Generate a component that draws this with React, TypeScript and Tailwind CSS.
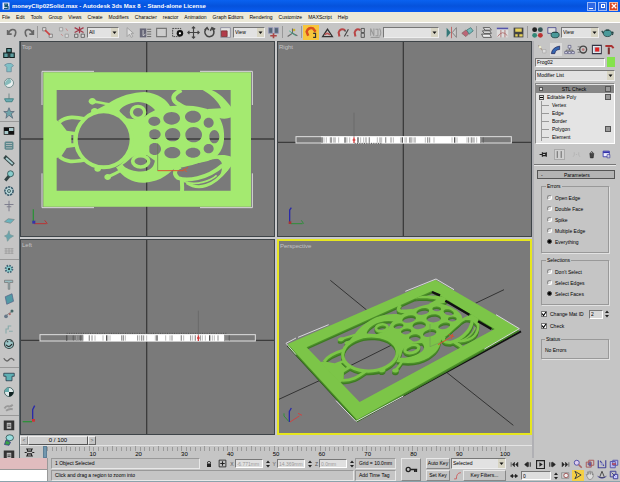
import React from 'react';

type Stroke = { d: string; w: number };
type Point = [number, number];

const menus = [
  'File', 'Edit', 'Tools', 'Group', 'Views', 'Create', 'Modifiers', 'Character', 'reactor', 'Animation',
  'Graph Editors', 'Rendering', 'Customize', 'MAXScript', 'Help',
];

/* ---------- frog model ---------- */

function ellipse(cx: number, cy: number, rx: number, ry: number) {
  const kx = rx * 0.55;
  const ky = ry * 0.55;
  return `M${cx - rx},${cy} C${cx - rx},${cy - ky} ${cx - kx},${cy - ry} ${cx},${cy - ry} C${cx + kx},${cy - ry} ${cx + rx},${cy - ky} ${cx + rx},${cy} C${cx + rx},${cy + ky} ${cx + kx},${cy + ry} ${cx},${cy + ry} C${cx - kx},${cy + ry} ${cx - rx},${cy + ky} ${cx - rx},${cy}Z`;
}

const shellHoles = [
  [403, 244, 18, 14], [455, 235, 25, 19], [519, 230, 24, 18], [566, 248, 15, 15],
  [404, 283, 18, 15], [458, 284, 23, 20], [521, 284, 25, 23], [583, 290, 15, 20],
  [404, 327, 19, 18], [457, 338, 24, 17], [519, 338, 22, 15], [566, 326, 15, 14],
].map(([cx, cy, rx, ry]) => ellipse(cx, cy, rx, ry)).join(' ');

const fills = [
  // frame
  'M70,97 L380,97 L693,97 L693,500 L380,500 L70,500Z M110,150 L110,452 L632,452 L632,150Z',
  // shell with its holes
  `M372,232 C390,215 420,203 446,199 C510,192 560,200 590,222 C610,245 614,275 612,300 C608,335 590,360 550,366 C520,372 490,376 455,390 L405,362 L380,345Z ${shellHoles}`,
  // neck
  'M318,235 L345,238 L376,230 L388,262 L388,345 L345,347 L318,360 C335,320 335,275 318,235Z',
  // upper arm
  'M232,208 L262,192 C300,166 340,157 375,156 C415,160 442,180 452,202 L410,218 C395,192 365,182 340,188 C322,192 305,200 298,212 C306,224 322,232 334,250 L320,248 C300,225 275,212 232,218Z',
  // lower arm
  'M288,382 C310,415 340,430 375,428 C425,424 450,400 474,372 L405,360 C402,385 385,398 350,394 C325,390 312,380 308,374 C322,365 332,355 342,344 L322,344 C312,365 302,375 288,382Z',
  // jaw
  'M108,240 L120,246 L140,272 L168,276 L168,320 L140,324 L122,352 L108,354Z M154,285 L154,310 L160,310 L160,285Z',
  // upper foot
  'M548,150 L575,150 C610,165 628,195 634,202 L634,232 C615,240 595,236 578,225 L562,207 L603,205 C595,185 575,165 548,150Z',
  // lower foot
  'M578,348 C600,343 620,344 634,350 L634,378 C620,396 610,408 596,416 C604,398 610,382 604,366 C598,358 588,352 578,348Z',
  ellipse(217, 184, 11, 10),
  ellipse(224, 213, 11, 9),
  ellipse(263, 411, 10, 9),
  ellipse(233, 387, 10, 8),
];

const strokes: Stroke[] = [
  { d: ellipse(251, 298, 84, 84), w: 12 },
  { d: ellipse(354, 217, 20, 18), w: 10 },
  { d: ellipse(362, 364, 24, 17), w: 11 },
  { d: 'M118,246 C140,228 165,230 196,237', w: 11 },
  { d: 'M118,350 C140,368 160,366 192,360', w: 11 },
  { d: 'M217,184 C230,185 248,190 268,193', w: 8 },
  { d: 'M263,411 C275,406 288,400 305,390', w: 9 },
  { d: 'M484,150 C468,158 456,168 462,180 C468,192 485,196 496,204', w: 13 },
  { d: 'M482,380 C462,388 460,402 474,414 C500,424 560,418 608,376', w: 12 },
  { d: 'M482,378 C520,374 560,350 600,352', w: 9 },
  { d: 'M486,416 C484,425 488,435 486,454', w: 12 },
  { d: 'M500,428 C535,452 580,440 620,388', w: 9 },
  { d: 'M490,424 C530,440 575,420 590,406', w: 5 },
];

// Maps the flat top view onto the quad that the camera sees.
const quad: Point[] = [[35, 318], [478, 125], [730, 272], [243, 545]];

function project(x: number, y: number): Point {
  const [[x0, y0], [x1, y1], [x2, y2], [x3, y3]] = quad;
  const u = (x - 70) / 623;
  const v = (y - 97) / 403;
  const sx = x0 - x1 + x2 - x3;
  const sy = y0 - y1 + y2 - y3;
  const den = (x1 - x2) * (y3 - y2) - (x3 - x2) * (y1 - y2);
  const g = (sx * (y3 - y2) - (x3 - x2) * sy) / den;
  const h = ((x1 - x2) * sy - sx * (y1 - y2)) / den;
  const w = g * u + h * v + 1;
  return [
    (x0 + (x1 - x0 + g * x1) * u + (x3 - x0 + h * x3) * v) / w,
    (y0 + (y1 - y0 + g * y1) * u + (y3 - y0 + h * y3) * v) / w,
  ];
}

function projectPath(d: string) {
  return d.replace(/(-?[\d.]+),(-?[\d.]+)/g, (_, a, b) =>
    project(Number(a), Number(b)).map((n) => n.toFixed(1)).join(','));
}

function Frog({ color, perspective = false }: { color: string; perspective?: boolean }) {
  const map = perspective ? projectPath : (d: string) => d;
  const scale = perspective ? 0.8 : 1;
  return (
    <g>
      {fills.map((d, i) => <path key={i} d={map(d)} fill={color} fillRule="evenodd" />)}
      {strokes.map((s, i) => <path key={i} d={map(s.d)} fill="none" stroke={color} strokeWidth={s.w * scale} />)}
    </g>
  );
}

/* ---------- viewports ---------- */

function Viewport({ name, viewBox, active, children }: { name: string; viewBox: string; active?: boolean; children: React.ReactNode }) {
  return (
    <section className={`relative min-h-0 min-w-0 overflow-hidden bg-[#7a7a7a] ${active ? 'border-2 border-[#e6e61e]' : 'border border-[#3e4448]'}`}>
      <svg viewBox={viewBox} className="block h-full w-full" preserveAspectRatio="xMidYMid meet">{children}</svg>
      <h2 className="absolute left-px top-px text-[6px] leading-[8px] text-[#c4c4c4]">{name}</h2>
    </section>
  );
}

function Cross({ x, y }: { x: number; y: number }) {
  return <path d={`M${x},0V600 M0,${y}H770`} stroke="#3c3c3c" strokeWidth="4" />;
}

const rightBars = [138, 144, 151, 163, 166, 172, 177, 188, 206, 209, 213, 221, 246, 254, 263, 270, 280, 304, 312, 317, 329, 345, 352, 374, 379, 387, 391, 401, 405, 411, 417, 448, 455, 461, 474, 528, 536, 543, 573, 578, 586, 590, 594, 602, 614, 622];
const leftBars = [140, 147, 153, 160, 170, 175, 182, 188, 208, 216, 225, 249, 260, 264, 270, 305, 310, 316, 353, 359, 365, 371, 380, 406, 411, 437, 450, 456, 484, 491, 512, 518, 526, 541, 547, 556, 569, 577, 583, 594, 614, 621, 628];

function SideView({ bars, start, end, red, shade }: { bars: number[]; start: number; end: number; red: number; shade: string }) {
  return (
    <g>
      <rect x="60" y="290" width="646" height="19" fill="#7a7a7a" stroke="#e0e0e0" strokeWidth="3" />
      <rect x={start} y="289" width={end - start} height="21" fill="#fff" />
      {bars.map((x, i) => <path key={x} d={`M${x},292V308`} stroke={i % 3 === 0 ? '#555' : '#999'} strokeWidth={i % 4 === 0 ? 4 : 2} />)}
      <path d={shade} stroke="#555" strokeWidth="3" strokeDasharray="3 4" fill="none" />
      <path d={`M${red},218V290`} stroke="#6a6a6a" strokeWidth="3" />
      <path d={`M${red},292V309 M${red - 4},300H${red + 4}`} stroke="#d33a3a" strokeWidth="4" />
    </g>
  );
}

function Viewports() {
  return (
    <div className="grid min-h-0 flex-1 grid-cols-2 grid-rows-2 gap-[2px] bg-[#c9c9cb]">
      <Viewport name="Top" viewBox="3 6 759 582">
        <Cross x={380} y={297} />
        <Frog color="#a4ea70" />
        <path d="M66,195V94H222 M540,94H697V195 M66,400V503H222 M540,503H697V400" fill="none" stroke="#dcdcdc" strokeWidth="3" />
        <path d="M413,310V392" stroke="#5f7a4b" strokeWidth="2" />
        <path d="M413,392H490 M488,392L504,382 M490,386L500,396" stroke="#d8562f" strokeWidth="3" fill="none" />
        <path d="M40,548V508" stroke="#2f8f3a" strokeWidth="4" />
        <path d="M42,551H80 M74,541L82,551" stroke="#b33" strokeWidth="3" />
        <rect x="37" y="542" width="9" height="9" fill="#33a" />
      </Viewport>
      <Viewport name="Right" viewBox="6 6 759 582">
        <Cross x={382} y={307} />
        <SideView bars={rightBars} start={135} end={612} red={234} shade="M236,310H320" />
        <path d="M41,548V510L46,503" stroke="#2a2aa8" strokeWidth="4" fill="none" />
        <path d="M44,551H80 M76,541L83,551" stroke="#2f8f3a" strokeWidth="3" />
        <rect x="38" y="544" width="8" height="8" fill="#a33" />
      </Viewport>
      <Viewport name="Left" viewBox="3 6 759 582">
        <Cross x={380} y={307} />
        <SideView bars={leftBars} start={190} end={612} red={535} shade="M140,286H620" />
        <path d="M38,548V515L44,503" stroke="#2a2aa8" strokeWidth="4" fill="none" />
        <path d="M36,551H8" stroke="#2f8f3a" strokeWidth="4" />
        <rect x="36" y="543" width="9" height="8" fill="#c33" />
      </Viewport>
      <Viewport name="Perspective" viewBox="9 9 753 576" active>
        <path d="M163,127L272,216 M598,196L684,155 M0,488L130,428 M508,400L712,562 M225,382L345,322" stroke="#333" strokeWidth="3" />
        <path d="M35,322L243,548L735,280" fill="none" stroke="#111" strokeWidth="6" />
        <g transform="translate(0 8)"><Frog color="#3d7a22" perspective /></g>
        <g transform="translate(0 4)"><Frog color="#4c8f2a" perspective /></g>
        <Frog color="#7cc548" perspective />
        <path d="M468,162L492,172 M508,188L580,230 M606,250L646,273" stroke="#111" strokeWidth="7" />
        <path d="M60,300L30,316L60,350 M66,298L158,260 M388,160L480,123L534,155 M180,488L240,550L382,474 M660,230L730,272L625,333" fill="none" stroke="#d8d8dc" strokeWidth="3" />
        <path d="M462,258V326L496,312" stroke="#6f9b55" strokeWidth="2" fill="none" />
        <path d="M486,320L524,298 M518,290L534,296 M526,302L530,288" stroke="#d8502f" strokeWidth="3" />
        <path d="M40,552V520L46,510" stroke="#2a2aa8" strokeWidth="4" fill="none" />
        <path d="M42,552L70,534 M66,526L78,532" stroke="#c44" strokeWidth="3" />
        <path d="M38,550L24,534V526" stroke="#2f8f3a" strokeWidth="3" fill="none" />
      </Viewport>
    </div>
  );
}

/* ---------- icons, all on a 16 unit grid ---------- */

const icons: Record<string, React.ReactNode> = {
  undo: <path d="M3 9C5 3 12 3 12 8Q12 11 10 13M2 5v5h5" stroke="#666" strokeWidth="2" />,
  redo: <path d="M13 9C11 3 4 3 4 8Q4 11 6 13M14 5v5H9" stroke="#666" strokeWidth="2" />,
  link: <><path d="M2 2h4v4H2zM10 10h4v4h-4z" stroke="#777" fill="#ddd" /><path d="M5 5l6 6" stroke="#c44" strokeWidth="2" /></>,
  unlink: <><path d="M3 2h4v4H3zM10 10h4v4h-4z" stroke="#999" fill="#ddd" /><path d="M11 3l2 3M5 10l2 2" stroke="#c77" /></>,
  bind: <><path d="M2 2l11 6M13 2L2 8M8 1v8" stroke="#a23a4a" strokeWidth="1.500" /><path d="M2 10h4v4H2zM10 10h4v4h-4z" fill="#ddd" stroke="#555" /></>,
  pointer: <path d="M5 2v11l3-3 2 4 2-1-2-4h3z" fill="#ddd" stroke="#999" />,
  byName: <><path d="M1 3h8v11H1z" fill="#667" /><path d="M10 4h5M10 7h5M10 10h5M10 13h5" stroke="#555" /><path d="M5 5v7l3-2" stroke="#ddd" /></>,
  rect: <path d="M2 3h12v10H2z" stroke="#777" strokeWidth="1.400" fill="#ccc" />,
  window: <><path d="M2 3h10v10H2z" stroke="#333" strokeDasharray="2 1" /><circle cx="11" cy="9" r="4" fill="#111" /><circle cx="11" cy="9" r="1.400" fill="#fff" /></>,
  move: <path d="M8 1v14M1 8h14M6 3l2-2 2 2M6 13l2 2 2-2M3 6L1 8l2 2M13 6l2 2-2 2" stroke="#444" strokeWidth="1.400" />,
  rotate: <path d="M4 3C0 8 4 14 9 13s6-7 2-10M2 5l3-3 2 3M9 6l2-4 4 2" stroke="#444" strokeWidth="1.800" />,
  scale: <><path d="M2 2h12v12H2z" fill="#e4e4e4" stroke="#889" /><path d="M3 6h7v7H3z" fill="#b23a4a" stroke="#733" /></>,
  pivot: <><path d="M2 2h5v7H2zM9 2h5v7H9z" fill="#567" stroke="#99b" /><path d="M4 12h8M8 9v6" stroke="#a44" strokeWidth="2" /></>,
  manip: <><path d="M8 3v6L2 13M8 9l6 3" stroke="#666" strokeWidth="1.400" /><circle cx="10" cy="5" r="1.500" fill="#c9b12c" /><path d="M4 6l8 6" stroke="#3a8" /></>,
  snap: <><path d="M4 12L2 7q2-6 8-4l3 4" stroke="#d9501c" strokeWidth="3" /><path d="M10 9h3v5h-3" stroke="#333" strokeWidth="1.400" /></>,
  angle: <><path d="M2 13L8 4l6 9z" stroke="#333" strokeWidth="1.600" /><path d="M5 11q2-4 6 0" stroke="#b55" strokeWidth="2" /></>,
  percent: <><path d="M3 13L2 8q2-6 8-3" stroke="#b84747" strokeWidth="2.500" /><path d="M9 13l5-9M9 6h2M12 12h2" stroke="#444" strokeWidth="1.400" /></>,
  spinner: <><path d="M3 13L2 8q2-6 7-3" stroke="#b84747" strokeWidth="2.500" /><path d="M10 3h4v5h-4zM10 9h4v5h-4z" stroke="#444" /></>,
  sets: <><path d="M2 12V3l4 9V3M8 4h3v8H8M13 3q3 5 0 10" stroke="#999" strokeWidth="1.300" /><path d="M2 14h11" stroke="#888" /></>,
  mirror: <><path d="M2 2v12l5-6z" fill="#377" /><path d="M14 2v12L9 8z" fill="#ccc" stroke="#777" /><path d="M8 1v14" stroke="#b55" /></>,
  align: <><path d="M1 9l5-4 5 3-5 5z" fill="#b67" stroke="#866" /><path d="M7 5l5-3 3 4-5 4z" fill="#7bb" stroke="#477" /></>,
  layers: <path d="M4 2h8l2 3H6zM3 6h9l2 3H5zM2 10h10l2 4H4z" fill="#eee" stroke="#444" />,
  curve: <><path d="M1 2h14v12H1z" fill="#ddd" /><path d="M1 3h14" stroke="#55a" strokeWidth="2" /><path d="M2 13Q8 4 14 12M6 5v9M11 5v9" stroke="#a66" /></>,
  schematic: <><path d="M2 2h12v12H2z" fill="#444" /><path d="M4 3h8v4H4zM4 10h3v3H4zM9 10h4v3H9z" fill="#e7d25a" /></>,
  material: <><circle cx="4.500" cy="4.500" r="3" fill="#222" /><circle cx="11.500" cy="4.500" r="3" fill="#355" /><circle cx="4.500" cy="11.500" r="3" fill="#387" /><circle cx="11.500" cy="11.500" r="3" fill="#b33" /></>,
  render: <><path d="M1 2h10v7H1z" fill="#ddd" stroke="#448" /><ellipse cx="10" cy="11" rx="5" ry="3.500" fill="#4a9a9a" stroke="#244" /><path d="M7 8h6" stroke="#244" /></>,
  teapot: <><ellipse cx="8" cy="9" rx="5" ry="4" fill="#4a9a9a" stroke="#244" /><path d="M3 9L1 6M13 8q3-2 1 3M6 5h4" stroke="#244" strokeWidth="1.500" /></>,
  cubes: <path d="M5 2h6v5H5zM1 8h6v6H1zM9 8h6v6H9z" fill="#5d9c9e" stroke="#122" strokeWidth="1.500" />,
  cloth: <path d="M2 4l4-2h5l3 3-3 2v6H5V7z" fill="#7fc0c6" stroke="#689" />,
  ball: <><circle cx="8" cy="8" r="6" fill="#e8eeee" stroke="#577" /><path d="M8 2q5 3 2 6l-7 4Q1 6 8 2" fill="#8bb" /></>,
  boat: <><path d="M2 9h12l-2 4H4z" fill="#6aacb4" stroke="#377" /><path d="M8 2v7" stroke="#577" /></>,
  star: <path d="M8 1l2 5h5l-4 3 2 6-5-4-4 4 1-6-4-3h5z" fill="#6fa4aa" stroke="#567" />,
  checker: <><path d="M1 3h14v10H1z" fill="#111" /><path d="M2 8h5v4H2zM8 4h6v4H8z" fill="#a8c8ca" /></>,
  spring: <path d="M3 3h10M3 6h10M3 9h10M3 12h10M3 3v9M13 3v9" stroke="#5c878c" strokeWidth="1.800" />,
  brush: <><path d="M2 2l12 11" stroke="#344" strokeWidth="5" /><path d="M4 4l9 8" stroke="#a9cdd0" strokeWidth="2.500" /></>,
  hammer: <><path d="M3 14l6-7" stroke="#344" strokeWidth="4" /><circle cx="10" cy="5" r="4" fill="#8cc" stroke="#244" /></>,
  wheel: <><circle cx="8" cy="8" r="5.500" fill="#b9d6d8" stroke="#356" strokeWidth="2" strokeDasharray="3 1" /><circle cx="8" cy="8" r="2" stroke="#244" /></>,
  axis: <path d="M8 1v14M2 6h12M5 9h6" stroke="#778" strokeWidth="1.200" />,
  plane: <path d="M2 9l5-4 8 1-5 5z" fill="#6ab4be" stroke="#788" />,
  crystal: <path d="M8 1l1 5 5 2-5 3-3 4-1-5-3-2 4-2z" fill="#6aa4ac" stroke="#799" />,
  grid: <path d="M2 5h12M2 8h12M2 11h12M4 4v8M8 4v8M12 4v8" stroke="#999" />,
  gear: <><circle cx="8" cy="8" r="4.500" fill="#8cc" stroke="#467" strokeWidth="2.500" strokeDasharray="2 1.500" /><circle cx="8" cy="8" r="1.500" fill="#233" /></>,
  tee: <path d="M2 3h11v3H9v9H7V6H2z" fill="#97bcc0" stroke="#777" />,
  box: <path d="M3 5l9-4 2 10-9 4z" fill="#5199a5" stroke="#568" />,
  nodes: <><path d="M3 11l5-4 5-3" stroke="#777" /><circle cx="4" cy="11" r="2.500" fill="#678" /><circle cx="12" cy="4" r="2" fill="#466" /><circle cx="9" cy="8" r="1.500" fill="#a66" /></>,
  steps: <path d="M4 14V8h3V4h4M8 11h5" stroke="#8aa" strokeWidth="1.500" />,
  face: <><circle cx="8" cy="8" r="6" fill="#9cc6c8" stroke="#344" strokeWidth="1.500" /><path d="M4 9q4 5 8-1M5 5h2M10 4h2" stroke="#222" strokeWidth="1.500" /></>,
  wave: <path d="M1 7q4 6 7 2t7 1" stroke="#666" strokeWidth="1.800" />,
  shirt: <path d="M1 3h14v4h-3v6H4V7H1z" fill="#5fb0b4" stroke="#234" />,
  orb: <><circle cx="8" cy="8" r="6" fill="#dfe9ea" stroke="#244" /><path d="M8 8h6q-1 6-6 6z" fill="#122" /><path d="M2 8Q3 2 8 2v6z" fill="#6aa" /></>,
  fog: <path d="M2 10q2-4 5-3t6-2M4 13q4-3 9-2" stroke="#999" strokeWidth="2.500" />,
  panel: <><path d="M1 2h14v13H1z" fill="#333" /><path d="M5 5h6v8H5z" fill="#bbb" /><path d="M6 8h4M6 10h4" stroke="#333" /></>,
  preview: <><ellipse cx="9" cy="5" rx="5" ry="4" fill="#9dd" stroke="#244" /><path d="M2 14l2-6 6 3-2 4z" fill="#36a147" stroke="#338" /></>,
  sun: <><path d="M2 2l9 11" stroke="#a98" strokeWidth="1.500" /><path d="M3 3h3v3H3z" fill="#eec" /><path d="M8 8h5v5H8z" fill="#ddd" stroke="#aaa" /></>,
  bend: <path d="M2 14Q3 5 14 3v5Q8 8 7 14z" fill="#3566b0" stroke="#225" />,
  tree: <><path d="M8 5v4M3 12V9h10v3" stroke="#555" /><path d="M6 2h4v4H6zM1 11h4v3H1zM6 11h4v3H6zM11 11h4v3h-4z" fill="#dde" stroke="#557" /></>,
  motion: <><circle cx="9" cy="8" r="5" stroke="#444" strokeWidth="2" /><circle cx="9" cy="8" r="2" fill="#b77" /><path d="M1 4h4M0 8h4M1 12h4" stroke="#666" /></>,
  display: <><path d="M2 2h13v12H2z" fill="#eee" stroke="#334" strokeWidth="1.500" /><path d="M4 4h9v8H4z" fill="#bcd" /><path d="M6 5h6v6H6z" fill="#d22" /></>,
  tools: <><path d="M7 5v10" stroke="#733" strokeWidth="3" /><path d="M2 3h9l3 3" stroke="#a33" strokeWidth="3" /></>,
  pin: <path d="M1 8h5M6 4v8M6 6h6v4H6M13 4v8" stroke="#222" strokeWidth="2" />,
  result: <path d="M4 2v12M11 2v12" stroke="#555" strokeWidth="1.500" />,
  unique: <path d="M4 4v5l-2 3M12 4v5l2 3M7 8h2" stroke="#aaa" />,
  trash: <><path d="M5 6h7l-1 8H6z" fill="#444" stroke="#222" /><path d="M6 5q2-4 5 0" stroke="#222" strokeWidth="1.500" /></>,
  config: <><path d="M2 2h11v10H2z" fill="#eef" stroke="#33a" strokeWidth="1.500" /><path d="M2 4h11" stroke="#33a" strokeWidth="3" /><path d="M9 8h5v6H9z" fill="#ccd" stroke="#339" /></>,
  curveMini: <path d="M3 3h10M3 13h10M5 3v3h6V3M5 13v-3h6v3M1 8h3M12 8h3" stroke="#222" strokeWidth="1.500" />,
  lock: <><path d="M4 7h8v7H4z" fill="#222" /><path d="M5 7V4q3-3 6 0v3" stroke="#222" strokeWidth="1.500" /></>,
  absolute: <><path d="M2 2h12v12H2z" stroke="#222" strokeWidth="1.500" /><path d="M8 4v8M4 8h8" stroke="#222" strokeWidth="2" /></>,
  key: <><circle cx="4" cy="8" r="2.500" stroke="#222" strokeWidth="1.600" /><path d="M7 8h8M12 8v3M14 8v3" stroke="#222" strokeWidth="1.800" /></>,
  tangent: <path d="M2 14h4Q6 3 14 3" stroke="#c55" strokeWidth="1.500" />,
  first: <path d="M2 4v8M8 4L4 8l4 4zM14 4l-4 4 4 4z" fill="#222" stroke="#222" />,
  prev: <path d="M8 4L3 8l5 4zM10 4v8M13 4v8" fill="#222" stroke="#222" strokeWidth="1.500" />,
  play: <><path d="M1 1h14v14H1z" stroke="#222" strokeWidth="2" /><path d="M6 4l6 4-6 4z" fill="#222" /></>,
  next: <path d="M8 4l5 4-5 4zM3 4v8M6 4v8" fill="#222" stroke="#222" strokeWidth="1.500" />,
  last: <path d="M14 4v8M8 4l4 4-4 4zM2 4l4 4-4 4z" fill="#222" stroke="#222" />,
  keyMode: <path d="M1 8l4-3v6zM15 8l-4-3v6zM5 8h6" fill="#222" stroke="#222" strokeWidth="2" />,
  timeConfig: <><path d="M1 3h13v10H1z" fill="#ccc" stroke="#777" /><circle cx="9" cy="8" r="4" fill="#eee" stroke="#944" strokeWidth="1.500" /></>,
  zoom: <><circle cx="6" cy="6" r="4" fill="#dce" stroke="#55a" strokeWidth="1.600" /><path d="M9 9l5 5" stroke="#a66" strokeWidth="2.500" /></>,
  zoomAll: <><path d="M2 5h8v8H2zM6 2h8v8H6z" stroke="#a55" strokeWidth="1.500" /><path d="M4 8h6M8 4v8" stroke="#449" strokeWidth="1.500" /></>,
  extents: <><path d="M2 2v12h12M14 2v12M5 3l6 8" stroke="#449" strokeWidth="1.800" /><path d="M6 6h4v4H6z" fill="#99c" /></>,
  extentsAll: <><path d="M2 4h8v10H2zM6 2h8v8H6z" fill="#bbe" stroke="#55a" strokeWidth="1.500" /><path d="M5 8h6" stroke="#b33" strokeWidth="2" /></>,
  fov: <path d="M3 2l10 6-10 6 3-6z" stroke="#444" strokeWidth="1.600" />,
  pan: <path d="M3 10L2 7l2 1V3h2v4l1-5h2v5l1-4h2v5l1-2v5l-3 4H6z" fill="#ddd" stroke="#777" />,
  orbit: <><path d="M8 2l4 10H4z" stroke="#444" strokeWidth="1.500" /><path d="M1 10q7 6 14 0" stroke="#449" strokeWidth="1.500" /></>,
  maximize: <><path d="M2 2h9v9H2z" stroke="#449" strokeWidth="1.600" /><path d="M7 7h7v7H7zM4 4l6 6" stroke="#449" strokeWidth="1.600" fill="#ccf" /></>,
};

function Icon({ name, className = 'size-[13px]' }: { name: string; className?: string }) {
  return <svg viewBox="0 0 16 16" fill="none" className={`shrink-0 ${className}`} aria-hidden="true">{icons[name]}</svg>;
}

function Tool({ name, active }: { name: string; active?: boolean }) {
  return (
    <button type="button" aria-label={name} className={`flex h-[15px] w-4 shrink-0 items-center justify-center ${active ? 'bg-[#f7c63c]' : ''}`}>
      <Icon name={name} />
    </button>
  );
}

function Combo({ label, value, className }: { label: string; value: string; className: string }) {
  return (
    <div className={`relative shrink-0 ${className}`}>
      <select aria-label={label} className="block h-[11px] w-full appearance-none border border-[#777] border-b-[#eee] border-r-[#eee] bg-[#e2e2e2] pl-px text-[5px] leading-[9px]">
        <option>{value}</option>
      </select>
      <svg viewBox="0 0 7 9" className="pointer-events-none absolute right-px top-px h-[9px] w-[7px] bg-[#d8d5c4]" aria-hidden="true">
        <path d="M1.500 3.500h4l-2 2.500z" fill="#111" />
      </svg>
    </div>
  );
}

function Divider() {
  return <div className="mx-px h-3 w-px shrink-0 bg-[#999]" />;
}

function TitleBar() {
  return (
    <header className="flex h-3 shrink-0 items-center bg-linear-to-b from-[#0a62f0] via-[#0552dc] to-[#0a5cf0] px-[2px] text-white">
      <svg viewBox="0 0 16 16" className="mr-[2px] size-2 shrink-0" aria-hidden="true">
        <path d="M1 1h14v14H1z" fill="#eef" />
        <path d="M4 4h7v3H6v2h6v4H4" fill="none" stroke="#157" strokeWidth="2.500" />
      </svg>
      <h1 className="min-w-0 flex-1 truncate whitespace-pre text-[6px] font-bold leading-3">moneyClip02Solid.max - Autodesk 3ds Max 8  - Stand-alone License</h1>
      <div className="flex gap-[2px]">
        <button type="button" aria-label="Minimize" className="flex size-[9px] items-end border border-[#9ab8f8] bg-[#2f68e4] p-px"><span className="h-px w-1 bg-white" /></button>
        <button type="button" aria-label="Restore" className="flex size-[9px] items-center justify-center border border-[#9ab8f8] bg-[#2f68e4]"><span className="size-1 border border-white" /></button>
        <button type="button" aria-label="Close" className="flex size-[9px] items-center justify-center border border-[#f2b8a0] bg-[#dc4a26]">
          <svg viewBox="0 0 8 8" className="size-[6px]" aria-hidden="true"><path d="M1 1l6 6M7 1L1 7" stroke="#fff" strokeWidth="1.600" /></svg>
        </button>
      </div>
    </header>
  );
}

function MainToolbar() {
  return (
    <div className="flex h-[19px] shrink-0 items-center overflow-hidden border-t border-white bg-[#c5c5c5] pl-1">
      {['undo', 'redo'].map((n) => <Tool key={n} name={n} />)}
      <Divider />
      {['link', 'unlink', 'bind'].map((n) => <Tool key={n} name={n} />)}
      <Combo label="Selection filter" value="All" className="mr-[2px] w-8" />
      {['pointer', 'byName', 'rect', 'window', 'move', 'rotate', 'scale'].map((n) => <Tool key={n} name={n} />)}
      <Combo label="Reference coordinate system" value="View" className="w-8" />
      <Tool name="pivot" />
      <Divider />
      <Tool name="manip" />
      <Divider />
      <Tool name="snap" active />
      {['angle', 'percent', 'spinner', 'sets'].map((n) => <Tool key={n} name={n} />)}
      <Combo label="Named selection sets" value="" className="mr-1 w-14" />
      {['mirror', 'align'].map((n) => <Tool key={n} name={n} />)}
      <Divider />
      <Tool name="layers" />
      {['curve', 'schematic'].map((n) => <Tool key={n} name={n} />)}
      <Divider />
      <Tool name="material" />
      <Tool name="render" />
      <Combo label="Render type" value="View" className="w-[38px]" />
      <Tool name="teapot" />
    </div>
  );
}

const sideGroups = [
  ['cubes', 'cloth', 'ball', 'boat', 'star'],
  ['checker', 'spring', 'brush', 'hammer', 'wheel', 'axis', 'plane', 'crystal', 'grid'],
  ['gear', 'tee', 'box', 'nodes', 'steps', 'face', 'wave'],
  ['shirt', 'orb', 'fog'],
  ['panel', 'preview', 'panel'],
];

function SideToolbar() {
  return (
    <div className="w-5 shrink-0 overflow-hidden border-r border-[#5d6a70] bg-[#c5c5c5] pt-1">
      {sideGroups.map((group, g) => (
        <div key={g} className="mb-px flex flex-col items-center border-b border-[#999] pb-px pr-px">
          {group.map((n, i) => (
            <button key={i} type="button" aria-label={n} className="flex h-[15px] w-4 items-center justify-center">
              <Icon name={n} className="size-3" />
            </button>
          ))}
        </div>
      ))}
    </div>
  );
}

/* ---------- command panel ---------- */

const subObjects = ['Vertex', 'Edge', 'Border', 'Polygon', 'Element'];

function Toggle() {
  return <span className="size-[6px] border border-[#555] bg-[#999]" />;
}

function ModifierStack() {
  return (
    <ul className="mt-[2px] h-[61px] border border-[#888] border-b-white border-r-white bg-[#e4e4e4] pt-px text-[5px] leading-[8px]">
      <li className="flex h-2 items-center bg-[#868686] px-[3px]">
        <span className="size-[4px] border border-[#555] bg-[#ddd]" />
        <span className="flex-1 text-center">STL Check</span>
        <Toggle />
      </li>
      <li className="flex h-2 items-center px-[3px]">
        <span className="mr-[3px] flex size-[5px] items-center justify-center border border-[#555]"><span className="h-px w-[3px] bg-black" /></span>
        <span className="flex-1">Editable Poly</span>
        <Toggle />
      </li>
      {subObjects.map((s) => (
        <li key={s} className="flex h-2 items-center px-[3px]">
          <span className="ml-[2px] mr-[3px] h-2 w-2 border-l border-[#999] pt-1"><span className="block h-px bg-[#999]" /></span>
          <span className="flex-1">{s}</span>
          {s === 'Polygon' && <Toggle />}
        </li>
      ))}
    </ul>
  );
}

function RadioGroup({ title, name, options, selected }: { title: string; name: string; options: string[]; selected: string }) {
  return (
    <fieldset className="mb-[3px] border border-[#999] pb-[5px] pl-[5px] pt-[2px] shadow-[1px_1px_0_#e2e2e2]">
      <legend className="-ml-px px-px text-[5px] leading-[8px]">{title}</legend>
      {options.map((o) => (
        <label key={o} className="flex h-[11px] items-center gap-[3px] text-[5px] leading-[8px]">
          <input type="radio" name={name} defaultChecked={o === selected} className="size-[5px] appearance-none rounded-full border border-[#888] border-b-white border-r-white bg-[#ddd] checked:border-[#444] checked:bg-black" />
          {o}
        </label>
      ))}
    </fieldset>
  );
}

function Tick({ label }: { label: string }) {
  return (
    <label className="flex h-3 shrink-0 items-center gap-[3px] whitespace-nowrap text-[5px] leading-[8px]">
      <span className="relative flex size-[6px]">
        <input type="checkbox" defaultChecked className="peer size-[6px] appearance-none border border-[#777] bg-white" />
        <svg viewBox="0 0 6 6" className="pointer-events-none absolute inset-0 hidden size-[6px] peer-checked:block" aria-hidden="true"><path d="M1 2.500l1.500 2L5 1" fill="none" stroke="#000" strokeWidth="1.200" /></svg>
      </span>
      {label}
    </label>
  );
}

function Spin() {
  return (
    <svg viewBox="0 0 4 8" className="h-2 w-1 shrink-0" aria-hidden="true"><path d="M0 3l2-2.500L4 3zM0 5l2 2.500L4 5z" fill="#222" /></svg>
  );
}

function CommandPanel() {
  return (
    <aside className="w-[88px] shrink-0 overflow-hidden border-l-2 border-[#b0b0b4] bg-[#c5c5c5] pr-1">
      <div className="flex h-4 items-center justify-between pl-[2px]">
        {['sun', 'bend', 'tree', 'motion', 'display', 'tools'].map((n) => (
          <button key={n} type="button" aria-label={n} className={`flex h-[13px] w-3 items-center justify-center ${n === 'bend' ? 'bg-[#dadada]' : ''}`}>
            <Icon name={n} className="size-[11px]" />
          </button>
        ))}
      </div>
      <div className="px-px">
        <div className="flex items-center gap-[2px]">
          <input aria-label="Object name" defaultValue="Frog02" className="h-[9px] min-w-0 flex-1 border border-[#777] border-b-white border-r-white bg-[#e2e2e2] pl-px text-[5px] leading-[7px]" />
          <button type="button" aria-label="Object color" className="h-[10px] w-2 bg-[#84e24c]" />
        </div>
        <Combo label="Modifier list" value="Modifier List" className="mt-[3px]" />
        <ModifierStack />
        <div className="flex h-5 items-center justify-between px-1">
          {['pin', 'result', 'unique', 'trash', 'config'].map((n) => (
            <button key={n} type="button" aria-label={n} className={n === 'result' ? 'border border-[#aaa] bg-[#d0d0d0]' : ''}><Icon name={n} className="size-[9px]" /></button>
          ))}
        </div>
      </div>
      <div className="border-t border-[#777] pl-[3px] pt-[5px] text-[5px] leading-[8px] shadow-[inset_0_1px_0_#e8e8e8]">
        <button type="button" className="flex h-[9px] w-[78px] items-center border border-[#555] bg-[#b4b4b4] px-[3px]">
          <span>-</span>
          <span className="flex-1 text-center">Parameters</span>
        </button>
        <div className="ml-1 mt-[3px] w-[68px]">
          <RadioGroup title="Errors" name="errors" options={['Open Edge', 'Double Face', 'Spike', 'Multiple Edge', 'Everything']} selected="Everything" />
          <RadioGroup title="Selections" name="selections" options={["Don't Select", 'Select Edges', 'Select Faces']} selected="Select Faces" />
          <div className="flex items-center gap-[2px]">
            <Tick label="Change Mat ID" />
            <input aria-label="Material ID" defaultValue="2" className="ml-auto h-[9px] w-[14px] border border-[#777] border-b-white border-r-white bg-[#d8d8d8] pl-px text-[5px] leading-[7px]" />
            <Spin />
          </div>
          <Tick label="Check" />
          <fieldset className="mt-[3px] border border-[#999] pb-1 pl-[3px] pt-[3px] shadow-[1px_1px_0_#e2e2e2]">
            <legend className="px-px">Status</legend>
            <p>No Errors</p>
          </fieldset>
        </div>
      </div>
    </aside>
  );
}

/* ---------- time line and status ---------- */

function TimeLine() {
  return (
    <div className="shrink-0 bg-[#c5c5c5] text-[6px] leading-[7px]">
      <div className="flex h-[10px] items-center">
        <button type="button" aria-label="Previous frame" className="h-[9px] w-2 border border-[#eee] border-b-[#888] border-r-[#888] text-[5px] leading-[7px] text-[#555]">&lt;</button>
        <button type="button" className="h-[9px] w-[60px] border border-[#eee] border-b-[#555] border-r-[#555] bg-[#cfcfcf]">0 / 100</button>
        <button type="button" aria-label="Next frame" className="h-[9px] w-2 border border-[#eee] border-b-[#666] border-r-[#666] text-[5px] leading-[7px] text-[#555]">&gt;</button>
      </div>
      <div className="flex h-[13px] border-t border-[#e4e4e4]">
        <button type="button" aria-label="Open mini curve editor" className="flex w-[23px] shrink-0 items-center pl-1"><Icon name="curveMini" className="size-[11px]" /></button>
        <div className="w-[4px] shrink-0 border border-[#5d7f96] bg-[#7297ae]" />
        <div className="min-w-0 flex-1">
          <div className="mr-[26px] flex h-[5px] items-end justify-between">
            {Array.from({ length: 100 }, (_, i) => <span key={i} className={`w-px bg-[#9a9a9a] ${i % 5 === 4 ? 'h-[5px]' : 'h-1'}`} />)}
          </div>
          <div className="mr-1 flex text-center">
            <span className="flex-1" />
            {[10, 20, 30, 40, 50, 60, 70, 80, 90, 100].map((n) => <span key={n} className="flex-2">{n}</span>)}
          </div>
        </div>
      </div>
    </div>
  );
}

function Coordinate({ axis, value }: { axis: string; value: string }) {
  return (
    <label className="flex items-center gap-px text-[#555]">
      {axis}
      <input defaultValue={value} className="h-[9px] w-[28px] border border-[#777] border-b-white border-r-white bg-[#e0e0e0] pl-px text-[5px] leading-[7px] text-[#999]" />
      <span className="ml-[2px]"><Spin /></span>
    </label>
  );
}

const field = 'h-[11px] whitespace-nowrap border border-[#999] border-b-[#e8e8e8] border-r-[#e8e8e8] pl-[3px] leading-[9px]';
const keyButton = 'h-[11px] whitespace-nowrap border border-[#e8e8e8] border-b-[#888] border-r-[#888] leading-[9px]';

function StatusBar() {
  return (
    <footer className="flex h-6 shrink-0 overflow-hidden border-b border-[#8ba3ac] bg-[#c5c5c5] text-[5px] leading-[8px]">
      <div className="mr-[3px] flex w-12 shrink-0 flex-col border-r border-[#999]">
        <input aria-label="Macro recorder" className="h-3 w-full border-b border-[#999] bg-[#e0bcbe]" />
        <input aria-label="Listener" className="h-[11px] w-full bg-white" />
      </div>
      <div className="flex min-w-0 flex-1 flex-col gap-px">
        <div className="flex items-center gap-[3px]">
          <p className={`${field} min-w-0 flex-1`}>1 Object Selected</p>
          <button type="button" aria-label="Selection lock" className="mx-[2px]"><Icon name="lock" className="size-2" /></button>
          <button type="button" aria-label="Absolute mode"><Icon name="absolute" className="size-[9px]" /></button>
          <Coordinate axis="X" value="-6.771mm" />
          <Coordinate axis="Y" value="14.369mm" />
          <Coordinate axis="Z" value="0.0mm" />
        </div>
        <p className={field}>Click and drag a region to zoom into</p>
      </div>
      <div className="ml-px flex w-[41px] shrink-0 flex-col gap-px">
        <p className={field}>Grid = 10.0mm</p>
        <button type="button" className={`${field} text-left`}>Add Time Tag</button>
      </div>
      <button type="button" aria-label="Set keys" className="mx-[5px] flex w-[20px] shrink-0 items-center justify-center border border-[#e8e8e8] border-b-[#888] border-r-[#888]"><Icon name="key" /></button>
      <div className="mr-px flex w-6 shrink-0 flex-col gap-px">
        <button type="button" className={keyButton}>Auto Key</button>
        <button type="button" className={keyButton}>Set Key</button>
      </div>
      <div className="flex w-[55px] shrink-0 flex-col gap-px">
        <Combo label="Key selection set" value="Selected" className="h-[11px]" />
        <div className="flex">
          <button type="button" aria-label="Default tangents" className="flex w-[12px] items-center justify-center"><Icon name="tangent" className="size-[9px]" /></button>
          <button type="button" className={`${keyButton} flex-1`}>Key Filters...</button>
        </div>
      </div>
      <div className="ml-1 flex w-[60px] shrink-0 flex-col">
        <div className="flex h-3 items-center justify-between">
          {['first', 'prev', 'play', 'next', 'last'].map((n) => <button key={n} type="button" aria-label={n}><Icon name={n} className="size-[9px]" /></button>)}
        </div>
        <div className="flex h-[11px] items-center justify-between">
          <button type="button" aria-label="Key mode"><Icon name="keyMode" className="size-2" /></button>
          <input aria-label="Current frame" defaultValue="0" className="h-[9px] w-[30px] border border-[#777] border-b-white border-r-white bg-[#dedede] pl-px text-[5px] leading-[7px]" />
          <Spin />
          <button type="button" aria-label="Time configuration"><Icon name="timeConfig" className="size-[9px]" /></button>
        </div>
      </div>
      <div className="ml-[2px] grid w-12 shrink-0 grid-cols-4">
        {['zoom', 'zoomAll', 'extents', 'extentsAll', 'fov', 'pan', 'orbit', 'maximize'].map((n) => (
          <button key={n} type="button" aria-label={n} className={`flex items-center justify-center ${n === 'fov' ? 'bg-[#f4cf45]' : ''}`}><Icon name={n} className="size-[10px]" /></button>
        ))}
      </div>
    </footer>
  );
}

export default function App() {
  return (
    <div className="flex h-screen flex-col overflow-hidden bg-[#c5c5c5] font-['Liberation_Sans',Arial,sans-serif] text-black">
      <TitleBar />
      <nav className="flex h-[10px] shrink-0 items-center gap-[6px] bg-[#ece9d8] pl-[2px] text-[5px] leading-[10px]">
        {menus.map((m) => <button key={m} type="button" className="whitespace-nowrap">{m}</button>)}
      </nav>
      <MainToolbar />
      <main className="flex min-h-0 flex-1">
        <SideToolbar />
        <div className="flex min-w-0 flex-1 flex-col">
          <Viewports />
          <TimeLine />
        </div>
        <CommandPanel />
      </main>
      <StatusBar />
    </div>
  );
}
